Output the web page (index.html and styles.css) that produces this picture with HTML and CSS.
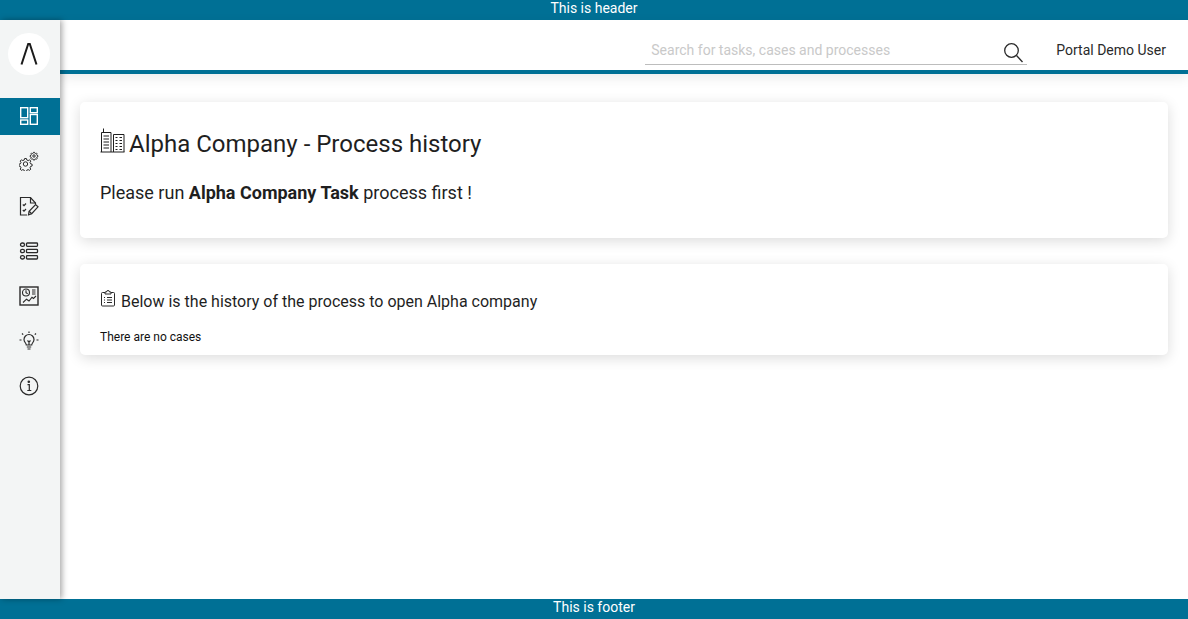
FILE: index.html
```html
<!DOCTYPE html>
<html lang="en">
<head>
<meta charset="utf-8">
<title>Alpha Company - Process history</title>
<link rel="stylesheet" href="styles.css">
</head>
<body>
<div class="banner banner-top">This is header</div>
<div class="middle">
  <aside class="sidebar">
    <div class="logo-wrap">
      <div class="logo">
        <svg width="18" height="24" viewBox="0 0 18 24"><path d="M1.500 22.500 8.200 2h1.600l6.700 20.500" fill="none" stroke="#1b1b1b" stroke-width="2"/></svg>
      </div>
    </div>
    <nav class="nav">
      <a class="nav-item active">
        <svg width="20" height="20" viewBox="0 0 20 20" fill="none" stroke="#fff" stroke-width="1.400"><rect x="1.700" y="1.700" width="7" height="10"/><rect x="11.300" y="1.700" width="7" height="5"/><rect x="1.700" y="14" width="7" height="4.300"/><rect x="11.300" y="8.500" width="7" height="9.800"/></svg>
      </a>
      <a class="nav-item">
        <svg width="20" height="20" viewBox="0 0 20 20" fill="none" stroke="#2a2a2a" stroke-width="1"><g transform="translate(-1 1)"><circle cx="7.500" cy="12" r="2.200"/><path d="M6.600 6.500h1.800l.4 1.500 1.400.6 1.400-.8 1.200 1.300-.8 1.300.6 1.400 1.500.4v1.800l-1.500.4-.6 1.400.8 1.300-1.200 1.300-1.400-.8-1.400.6-.4 1.500H6.600l-.4-1.500-1.400-.6-1.400.8-1.200-1.300.8-1.300-.6-1.400-1.500-.4v-1.800l1.500-.4.6-1.400-.8-1.300 1.200-1.300 1.400.8 1.400-.6z"/></g><g transform="translate(-.5 .5)"><circle cx="15.500" cy="4.500" r="1.200"/><path d="M15 .8h1l.3.9.8.3.8-.4.7.7-.4.8.3.8.9.3v1l-.9.3-.3.8.4.8-.7.7-.8-.4-.8.3-.3.9h-1l-.3-.9-.8-.3-.8.4-.7-.7.4-.8-.3-.8-.9-.3v-1l.9-.3.3-.8-.4-.8.7-.7.8.4.8-.3z"/></g></svg>
      </a>
      <a class="nav-item">
        <svg width="20" height="20" viewBox="0 0 20 20" fill="none" stroke="#2a2a2a" stroke-width="1.200"><path d="M8 19H1.500V1.500h10l5 5.500v1"/><path d="M11.500 1.500V7h5"/><path d="M3.800 8.500l1.200 1.200 2-2.200M3.800 14l1.200 1.200 2-2.200"/><path d="M9.500 18.800l.6-3.500 6.500-6.800 2.400 2.300-6.300 6.900z"/><path d="M10.100 15.300l2.600 2.400"/></svg>
      </a>
      <a class="nav-item">
        <svg width="20" height="20" viewBox="0 0 20 20" fill="none" stroke="#2a2a2a" stroke-width="1.300"><rect x="1.500" y="2" width="4" height="3.400" rx="1.700"/><rect x="7.500" y="2" width="11" height="3.400" rx=".8"/><rect x="1.500" y="8.300" width="4" height="3.400" rx="1.700"/><rect x="7.500" y="8.300" width="11" height="3.400" rx=".8"/><rect x="1.500" y="14.600" width="4" height="3.400" rx="1.700"/><rect x="7.500" y="14.600" width="11" height="3.400" rx=".8"/></svg>
      </a>
      <a class="nav-item">
        <svg width="20" height="20" viewBox="0 0 20 20" fill="none" stroke="#2a2a2a" stroke-width="1.100"><rect x="1" y="1" width="18" height="18" stroke-width="1.400"/><circle cx="7" cy="6.500" r="3.500"/><path d="M7 4.300v2.400l1.700 1M13 4h3.500M13 6h3.500M13 8h3.500"/><path d="M4 16.500l3.500-3.300 2.500 1.800 3-3.800 1.500 1.200 2.500-2.400"/></svg>
      </a>
      <a class="nav-item">
        <svg width="20" height="20" viewBox="0 0 20 20" fill="none" stroke="#2a2a2a" stroke-width="1.200"><path d="M7.300 14c0-2-2.300-2.700-2.300-5.500a5 5 0 0 1 10 0c0 2.800-2.300 3.500-2.300 5.500z"/><path d="M7.800 16h4.400M8.500 18h3M8.500 9.500 10 11l1.500-1.500M10 11v3"/><path d="M10 .5v1.500M3 2.500l1.200 1.200M17 2.500l-1.200 1.200M.5 9H2.500M17.500 9h2"/></svg>
      </a>
      <a class="nav-item">
        <svg width="20" height="20" viewBox="0 0 20 20" fill="none" stroke="#2a2a2a" stroke-width="1.200"><circle cx="10" cy="10" r="8.800"/><path d="M8.500 8.700h1.800v5.800M8.300 14.500h4"/><circle cx="9.800" cy="5.800" r=".7" fill="#2a2a2a"/></svg>
      </a>
    </nav>
  </aside>
  <div class="main">
    <header class="topbar">
      <div class="search">
        <span class="search-placeholder">Search for tasks, cases and processes</span>
        <svg class="search-icon" width="20" height="20" viewBox="0 0 20 20" fill="none" stroke="#2a2a2a" stroke-width="1.300"><circle cx="7.500" cy="7.500" r="6.800"/><path d="M12.500 12.500l6 6.500"/></svg>
      </div>
      <span class="user">Portal Demo User</span>
    </header>
    <main class="content">
      <section class="card card-intro">
        <h1 class="title">
          <svg class="title-icon" width="25" height="25" viewBox="0 0 25 25" fill="none" stroke="#1f1f1f" stroke-width="1"><path d="M1.500 24V4.500h9.500V24M.5 24h24M3.500 4.500V.500M13.500 24V6.500H24V24"/><path d="M3.500 8h5.500M3.500 11h5.500M3.500 14h5.500M3.500 17h5.500M3.500 20h5.500M15.500 9.500h2M15.500 12.500h2M15.500 15.500h2M15.500 18.500h2M15.500 21.500h2M19.500 9.500h2.500M19.500 12.500h2.500M19.500 15.500h2.500M19.500 18.500h2.500M19.500 21.500h2.500"/></svg>
          <span>Alpha Company - Process history</span>
        </h1>
        <p class="lead">Please run <strong>Alpha Company Task</strong> process first !</p>
      </section>
      <section class="card card-history">
        <h2 class="subtitle">
          <svg class="subtitle-icon" width="16" height="17" viewBox="0 0 16 17" fill="none" stroke="#2a2a2a" stroke-width="1"><path d="M5 2.500H2.500a1 1 0 0 0-1 1v11.500a1 1 0 0 0 1 1h11a1 1 0 0 0 1-1V3.500a1 1 0 0 0-1-1H11"/><path d="M5 4V2h1.500a1.500 1.500 0 0 1 3 0H11v2z"/><path d="M4 7.500h1M7 7.500h5M4 10h1M7 10h5M4 12.500h1M7 12.500h5"/></svg>
          <span>Below is the history of the process to open Alpha company</span>
        </h2>
        <p class="empty">There are no cases</p>
      </section>
    </main>
  </div>
</div>
<div class="banner banner-bottom">This is footer</div>
</body>
</html>
```

FILE: styles.css
```css
* { box-sizing: border-box; }
html, body { height: 100%; margin: 0; overflow: hidden; }
body {
  display: flex;
  flex-direction: column;
  font-family: Roboto, "Liberation Sans", sans-serif;
  color: #1f1f1f;
  background: #fff;
}
.banner {
  flex: 0 0 20px;
  height: 20px;
  background: #007095;
  color: #fff;
  font-size: 14px;
  line-height: 16px;
  text-align: center;
}
.banner-bottom { line-height: 17px; }
.middle { flex: 1; display: flex; min-height: 0; }
.sidebar {
  flex: 0 0 60px;
  background: #f3f5f5;
  box-shadow: 2px 0 6px rgba(0, 0, 0, .35);
  position: relative;
  z-index: 2;
}
.logo-wrap { padding: 13px 0 0 8px; height: 78px; }
.logo {
  width: 42px;
  height: 42px;
  border-radius: 50%;
  background: #fff;
  display: flex;
  align-items: center;
  justify-content: center;
}
.nav { display: flex; flex-direction: column; }
.nav-item {
  height: 37px;
  margin-bottom: 8px;
  display: flex;
  align-items: center;
  padding-left: 19px;
}
.nav-item svg { margin-top: -1px; }
.nav-item.active { background: #007095; }
.main { flex: 1; display: flex; flex-direction: column; min-width: 0; }
.topbar {
  flex: 0 0 54px;
  border-bottom: 4px solid #007095;
  display: flex;
  align-items: flex-start;
  justify-content: flex-end;
  padding: 20px 22px 0 0;
  box-shadow: 0 4px 12px rgba(0, 0, 0, .08);
}
.search {
  width: 382px;
  height: 25px;
  border-bottom: 1px solid #bdbdbd;
  display: flex;
  justify-content: space-between;
  padding: 2px 3px 0 6px;
}
.search-placeholder { font-size: 14px; line-height: 17px; color: #c9c9c9; }
.search-icon { margin-top: 1px; }
.user { margin-left: 29px; font-size: 14px; line-height: 20px; color: #2a2a2a; }
.content { flex: 1; padding: 28px 20px 0; display: flex; flex-direction: column; gap: 26px; }
.card {
  background: #fff;
  border-radius: 5px;
  box-shadow: 0 3px 14px rgba(0, 0, 0, .14);
  padding: 0 20px;
}
.card-intro { height: 136px; padding-top: 27px; }
.card-history { height: 91px; padding-top: 27px; }
.title {
  margin: 0;
  display: flex;
  align-items: center;
  gap: 4px;
  height: 30px;
  font-size: 24px;
  font-weight: 400;
  color: #1f1f1f;
}
.title-icon { margin-top: -8px; }
.lead { margin: 23px 0 0; font-size: 18px; line-height: 21px; color: #1f1f1f; }
.lead strong { font-weight: 700; }
.subtitle {
  margin: 0;
  display: flex;
  align-items: center;
  gap: 5px;
  height: 20px;
  font-size: 16px;
  font-weight: 400;
  color: #1f1f1f;
}
.subtitle-icon { margin-top: -5px; }
.empty { margin: 18px 0 0; font-size: 12px; line-height: 16px; color: #111; }
```
